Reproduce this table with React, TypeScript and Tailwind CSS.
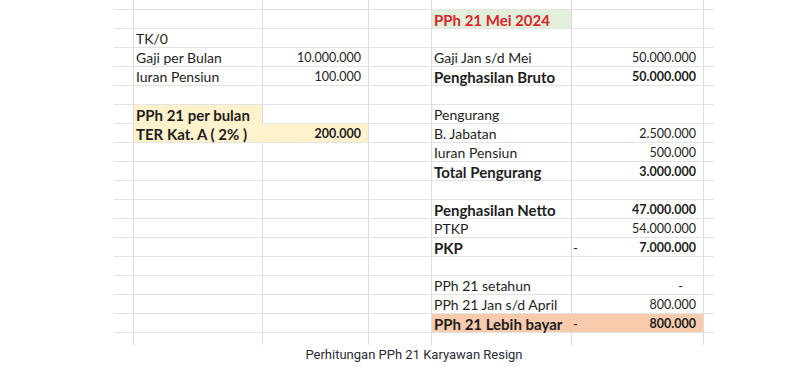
import React from 'react';

type Cell = {
  t?: string;
  b?: boolean;
  right?: boolean;
  dash?: boolean;
  zero?: boolean;
  bg?: string;
  red?: boolean;
  hideR?: boolean;
  hideB?: boolean;
};

const widths = ['w-[20px]', 'w-[129px]', 'w-[106px]', 'w-[63px]', 'w-[140px]', 'w-[132px]', 'w-[10px]'];

// row index -> column index -> cell
const rows: Record<number, Record<number, Cell>> = {
  1: { 4: { t: 'PPh 21 Mei 2024', b: true, red: true, bg: 'bg-[#e2efda]' } },
  2: { 1: { t: 'TK/0' } },
  3: {
    1: { t: 'Gaji per Bulan' },
    2: { t: '10.000.000', right: true },
    4: { t: 'Gaji Jan s/d Mei' },
    5: { t: '50.000.000', right: true },
  },
  4: {
    1: { t: 'Iuran Pensiun' },
    2: { t: '100.000', right: true },
    4: { t: 'Penghasilan Bruto', b: true },
    5: { t: '50.000.000', right: true, b: true },
  },
  6: {
    1: { t: 'PPh 21 per bulan', b: true, bg: 'bg-[#fff2cc]', hideB: true },
    4: { t: 'Pengurang' },
  },
  7: {
    1: { t: 'TER Kat. A ( 2% )', b: true, bg: 'bg-[#fff2cc]', hideR: true },
    2: { t: '200.000', right: true, b: true, bg: 'bg-[#fff2cc]' },
    4: { t: 'B. Jabatan' },
    5: { t: '2.500.000', right: true },
  },
  8: { 4: { t: 'Iuran Pensiun' }, 5: { t: '500.000', right: true } },
  9: { 4: { t: 'Total Pengurang', b: true }, 5: { t: '3.000.000', right: true, b: true } },
  11: { 4: { t: 'Penghasilan Netto', b: true }, 5: { t: '47.000.000', right: true, b: true } },
  12: { 4: { t: 'PTKP' }, 5: { t: '54.000.000', right: true } },
  13: { 4: { t: 'PKP', b: true }, 5: { t: '7.000.000', right: true, b: true, dash: true } },
  15: { 4: { t: 'PPh 21 setahun' }, 5: { zero: true } },
  16: { 4: { t: 'PPh 21 Jan s/d April' }, 5: { t: '800.000', right: true } },
  17: {
    4: { t: 'PPh 21 Lebih bayar', b: true, bg: 'bg-[#f8cbad]', hideR: true },
    5: { t: '800.000', right: true, b: true, dash: true, bg: 'bg-[#f8cbad]' },
  },
};

function SheetCell({ row, col }: { row: number; col: number }) {
  const c: Cell = rows[row]?.[col] ?? {};
  const last = row === 18;
  const height = row === 0 ? 'h-[10px]' : last ? 'h-[12px]' : 'h-[19px]';
  const bottom = last ? '' : c.hideB ? 'border-b border-b-transparent' : 'border-b border-b-[#e3e3e3]';
  const right = col === 6 ? '' : c.hideR ? 'border-r border-r-transparent' : 'border-r border-r-[#dbdbdb]';
  const size = c.right ? 'text-[12.5px]' : c.b ? 'text-[15px]' : 'text-[14px]';
  return (
    <div
      className={`relative flex items-end shrink-0 ${widths[col]} ${height} ${bottom} ${right} ${c.bg ?? ''} ${
        c.right ? 'justify-end pr-[7px]' : 'pl-[2px]'
      } ${c.b ? 'font-bold' : 'font-normal'} ${c.red ? 'text-[#d9262b]' : 'text-[#1e1e1e]'}`}
    >
      {c.dash && <span className="absolute left-[1px] bottom-0 text-[13px] leading-[16px] font-normal">-</span>}
      {c.zero && <span className="absolute right-[20px] bottom-0 text-[13px] leading-[16px]">-</span>}
      {c.t && <span className={`whitespace-nowrap leading-[16px] ${size}`}>{c.t}</span>}
    </div>
  );
}

export default function App() {
  const rowIdx = Array.from({ length: 19 }, (_, i) => i);
  const colIdx = [0, 1, 2, 3, 4, 5, 6];
  return (
    <div className="w-[809px] h-[369px] bg-white flex flex-col items-center pl-[19px] overflow-hidden">
      <div className="w-[600px] h-[344px] flex flex-col font-['Lato',sans-serif]">
        {rowIdx.map((r) => (
          <div key={r} className="flex">
            {colIdx.map((c) => (
              <SheetCell key={c} row={r} col={c} />
            ))}
          </div>
        ))}
      </div>
      <p className="mt-[2px] text-[13px] leading-[18px] text-[#2b2b3a] font-['Roboto',sans-serif]">
        Perhitungan PPh 21 Karyawan Resign
      </p>
    </div>
  );
}
